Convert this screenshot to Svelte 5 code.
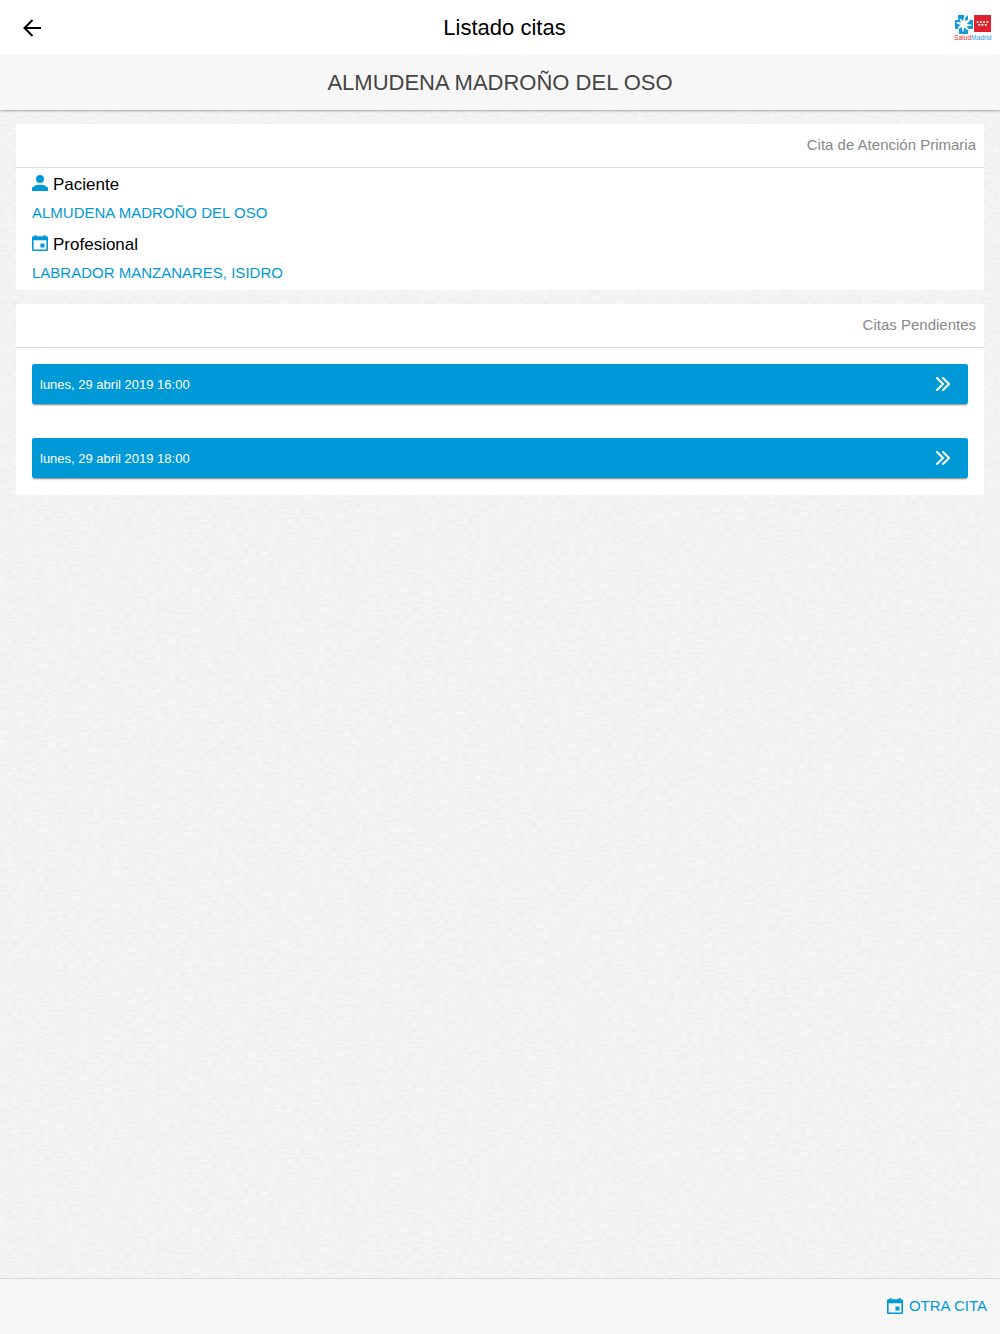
<script>
  let patient = 'ALMUDENA MADROÑO DEL OSO';
  let professional = 'LABRADOR MANZANARES, ISIDRO';

  let appointments = [
    { id: 1, label: 'lunes, 29 abril 2019 16:00' },
    { id: 2, label: 'lunes, 29 abril 2019 18:00' }
  ];
</script>

{#snippet calendarIcon()}
  <svg class="icon" viewBox="0 0 18 18" aria-hidden="true">
    <path
      fill-rule="evenodd"
      d="M3 0h2v1.500h8V0h2v1.500h1.500A1.500 1.500 0 0 1 18 3v13.500a1.500 1.500 0 0 1-1.500 1.500h-15A1.500 1.500 0 0 1 0 16.500V3a1.500 1.500 0 0 1 1.500-1.500H3zM1.800 6v10.200h14.400V6zM9.500 9.500H14V14H9.500z"
    />
  </svg>
{/snippet}

<div class="page">
  <header class="toolbar">
    <button class="back" aria-label="Volver">
      <svg viewBox="0 0 18 18" aria-hidden="true">
        <path d="M18 9H1.500M9.500 1L1.500 9l8 8" />
      </svg>
    </button>
    <h1>Listado citas</h1>
    <div class="brand">
      <svg viewBox="0 0 38 28" role="img" aria-label="SaludMadrid">
        <path fill="#159bd7" d="M4 1h6l1 3 3-3v5h5v9h-5v5H5v-5H1V6h3z" />
        <path
          fill="#fff"
          d="M10.500 1l.8 6L15 5.500l.6 1.400-3 3 5 .8v1l-5 .3 2 3-1.100 1-3.500-2.500-.5 4H8.400l-.5-4.200L4.500 15l-.8-1.300L6.500 11 2.500 9.200l.4-1.100L7 8.500 5.500 5.500l1.200-.5L9 7z"
        />
        <rect x="20" y="1" width="17" height="17" fill="#e0202b" />
        <g fill="#fff">
          <circle cx="23.500" cy="8" r="1.100" />
          <circle cx="26.800" cy="8" r="1.100" />
          <circle cx="30.100" cy="8" r="1.100" />
          <circle cx="33.400" cy="8" r="1.100" />
          <circle cx="25.200" cy="10.800" r="1.100" />
          <circle cx="28.500" cy="10.800" r="1.100" />
          <circle cx="31.800" cy="10.800" r="1.100" />
        </g>
        <text x="0" y="25.500" font-size="6.700">
          <tspan fill="#e8303c">Salud</tspan><tspan fill="#159bd7">Madrid</tspan>
        </text>
      </svg>
    </div>
  </header>

  <h2 class="subheader">{patient}</h2>

  <main>
    <svg class="paper" aria-hidden="true">
      <filter id="paper" x="0" y="0" width="100%" height="100%" color-interpolation-filters="sRGB">
        <feTurbulence type="fractalNoise" baseFrequency="0.16 0.4" numOctaves="3" seed="4" />
        <feColorMatrix
          values="0.05 0 0 0 0.927  0.05 0 0 0 0.927  0.05 0 0 0 0.927  0 0 0 0 1"
        />
      </filter>
      <rect width="100%" height="100%" filter="url(#paper)" />
    </svg>

    <section class="card">
      <h3>Cita de Atención Primaria</h3>
      <dl>
        <div>
          <dt>
            <svg class="icon" viewBox="0 0 18 18" aria-hidden="true">
              <circle cx="9" cy="4.500" r="4.500" />
              <path d="M0 18v-2.200C0 12.500 5 11 9 11s9 1.500 9 4.800V18z" />
            </svg>
            Paciente
          </dt>
          <dd>{patient}</dd>
        </div>
        <div>
          <dt>{@render calendarIcon()} Profesional</dt>
          <dd>{professional}</dd>
        </div>
      </dl>
    </section>

    <section class="card">
      <h3>Citas Pendientes</h3>
      <div class="appointments">
        {#each appointments as appointment (appointment.id)}
          <button class="appointment">
            <span>{appointment.label}</span>
            <svg viewBox="0 0 14 14" aria-hidden="true">
              <path d="M1 1l6 6-6 6M7 1l6 6-6 6" />
            </svg>
          </button>
        {/each}
      </div>
    </section>
  </main>

  <footer>
    <button class="new-appointment">{@render calendarIcon()} OTRA CITA</button>
  </footer>
</div>

<style>
  :global(body) {
    margin: 0;
  }

  .page {
    display: flex;
    flex-direction: column;
    min-height: 100vh;
    font-family: "Liberation Sans", Arial, sans-serif;
    color: #000;
  }

  h1,
  h2,
  h3,
  dl,
  dd {
    margin: 0;
    font-weight: 400;
  }

  button {
    border: 0;
    padding: 0;
    background: none;
    font-family: inherit;
    cursor: pointer;
  }

  .toolbar {
    z-index: 2;
    display: flex;
    align-items: center;
    height: 55px;
    background: #fff;
  }

  .back {
    display: flex;
    align-items: center;
    width: 55px;
    height: 55px;
    padding-left: 23px;
  }

  .back svg {
    width: 18px;
    height: 18px;
    fill: none;
    stroke: #000;
    stroke-width: 2;
  }

  h1 {
    flex: 1;
    font-size: 22px;
    text-align: center;
  }

  .brand {
    width: 46px;
  }

  .brand svg {
    display: block;
    width: 38px;
    height: 28px;
  }

  .subheader {
    z-index: 1;
    height: 55px;
    line-height: 55px;
    background: #f7f7f7;
    box-shadow: 0 1px 2px rgba(0, 0, 0, 0.35);
    color: #444;
    font-size: 22px;
    text-align: center;
  }

  main {
    position: relative;
    flex: 1;
    display: flex;
    flex-direction: column;
    gap: 14px;
    padding: 14px 16px;
    background: #f3f3f3;
  }

  /* paper grain behind the cards */
  .paper {
    position: absolute;
    inset: 0;
    width: 100%;
    height: 100%;
  }

  .toolbar,
  .subheader,
  .card {
    position: relative;
  }

  .card {
    background: #fff;
  }

  h3 {
    padding: 0 8px 1px;
    border-bottom: 1px solid #dedede;
    line-height: 42px;
    color: #888;
    font-size: 15px;
    text-align: right;
  }

  dl {
    display: flex;
    flex-direction: column;
    gap: 4px;
    padding: 1px 16px 5px;
  }

  dt {
    display: flex;
    align-items: center;
    gap: 5px;
    line-height: 32px;
    font-size: 17px;
  }

  dt .icon {
    margin-bottom: 4px;
  }

  dd {
    line-height: 24px;
    color: #0099d8;
    font-size: 15px;
  }

  .icon {
    width: 16px;
    height: 16px;
    fill: #0099d8;
  }

  .appointments {
    display: flex;
    flex-direction: column;
    gap: 34px;
    padding: 16px 16px 17px;
  }

  .appointment {
    display: flex;
    align-items: center;
    justify-content: space-between;
    height: 40px;
    padding: 0 18px 0 8px;
    border-radius: 2px;
    background: #0099d8;
    box-shadow: 0 2px 2px -1px rgba(0, 0, 0, 0.5);
    color: #fff;
    font-size: 13px;
  }

  .appointment svg {
    width: 14px;
    height: 14px;
    fill: none;
    stroke: #fff;
    stroke-width: 2;
    stroke-linecap: round;
  }

  footer {
    display: flex;
    align-items: center;
    justify-content: flex-end;
    height: 53px;
    padding: 0 13px 2px;
    border-top: 1px solid #dadada;
    background: #f7f7f7;
  }

  .new-appointment {
    display: flex;
    align-items: center;
    gap: 6px;
    color: #0099d8;
    font-size: 15px;
  }
</style>
